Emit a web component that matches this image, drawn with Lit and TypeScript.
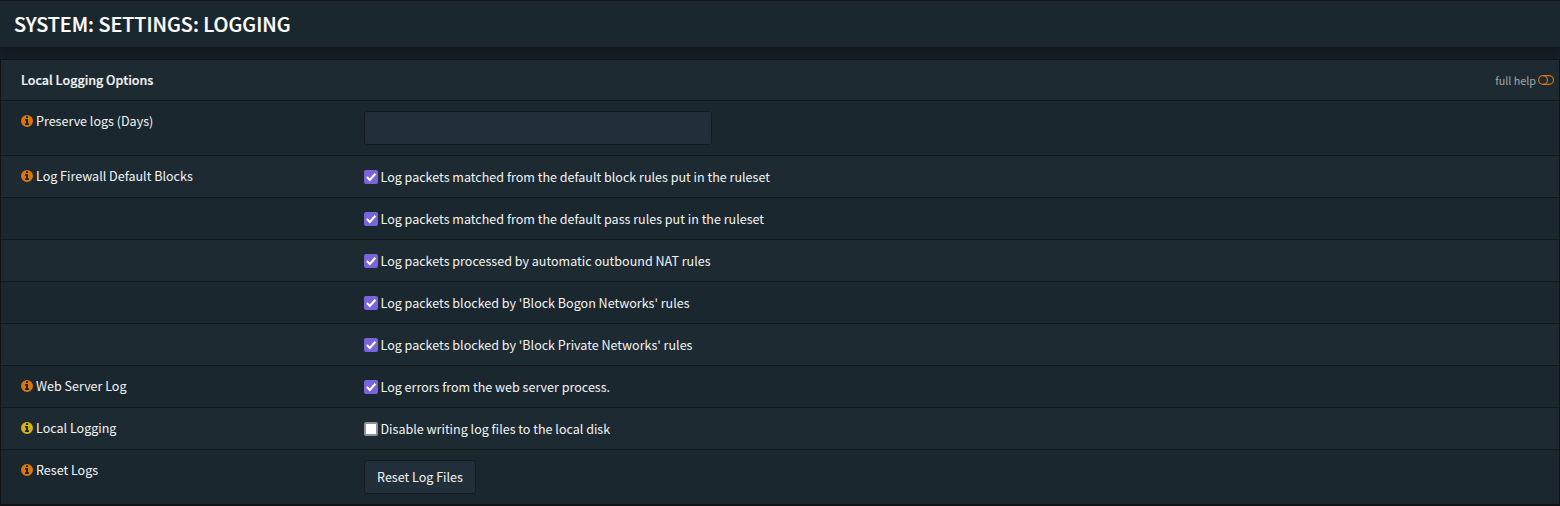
import { LitElement, html, css, svg } from "lit";
import { customElement } from "lit/decorators.js";

interface Option {
  label?: string;
  tone?: "orange" | "yellow";
  kind: "input" | "check" | "button";
  text?: string;
  checked?: boolean;
}

const OPTIONS: Option[] = [
  { label: "Preserve logs (Days)", tone: "orange", kind: "input" },
  { label: "Log Firewall Default Blocks", tone: "orange", kind: "check", checked: true, text: "Log packets matched from the default block rules put in the ruleset" },
  { kind: "check", checked: true, text: "Log packets matched from the default pass rules put in the ruleset" },
  { kind: "check", checked: true, text: "Log packets processed by automatic outbound NAT rules" },
  { kind: "check", checked: true, text: "Log packets blocked by 'Block Bogon Networks' rules" },
  { kind: "check", checked: true, text: "Log packets blocked by 'Block Private Networks' rules" },
  { label: "Web Server Log", tone: "orange", kind: "check", checked: true, text: "Log errors from the web server process." },
  { label: "Local Logging", tone: "yellow", kind: "check", checked: false, text: "Disable writing log files to the local disk" },
  { label: "Reset Logs", tone: "orange", kind: "button", text: "Reset Log Files" },
];

const infoGlyph = svg`<path fill-rule="evenodd" d="M768 0a768 768 0 1 1 0 1536a768 768 0 1 1 0-1536zM1024 1248v-160q0-14-9-23t-23-9h-96v-512q0-14-9-23t-23-9h-320q-14 0-23 9t-9 23v160q0 14 9 23t23 9h96v320h-96q-14 0-23 9t-9 23v160q0 14 9 23t23 9h448q14 0 23-9t9-23zM896 352v-160q0-14-9-23t-23-9h-192q-14 0-23 9t-9 23v160q0 14 9 23t23 9h192q14 0 23-9t9-23z"/>`;

@customElement("app-root")
export class AppRoot extends LitElement {
  static styles = css`
    :host {
      display: block;
      height: 506px;
      overflow: hidden;
      box-sizing: border-box;
      background: #151d25;
      color: #f2f4f5;
      font: 12.54px/20px "Noto Sans CJK SC", sans-serif;
    }
    .head {
      box-sizing: border-box;
      height: 47px;
      padding: 0 14px;
      border-top: 1px solid #171819;
      background: #1b272e;
      box-shadow: 0 1px 7px 1px #161616;
    }
    h1 {
      margin: 0;
      font-size: 19.75px;
      font-weight: 500;
      line-height: 46px;
      color: #fff;
      -webkit-text-stroke: 0.2px currentColor;
    }
    .panel {
      margin-top: 12px;
      border: 1px solid #121314;
      border-bottom-width: 2px;
    }
    .row {
      display: grid;
      grid-template-columns: 343px 1fr;
      box-sizing: border-box;
      height: 42px;
      padding: 10px 0 0 20px;
      border-top: 1px solid #16191b;
      background: #1b272e;
    }
    .row:nth-child(odd) {
      background: #1e2a31;
    }
    .row.tall {
      height: 55px;
    }
    .row.title {
      height: 40px;
      border-top: 0;
      grid-template-columns: 1fr auto;
      align-items: start;
      padding-right: 5px;
    }
    .title b {
      font-weight: 500;
      -webkit-text-stroke: 0.2px currentColor;
    }
    .help {
      display: flex;
      align-items: center;
      gap: 2px;
      font-size: 10.75px;
      line-height: 22px;
      color: #a4a8aa;
    }
    .help svg {
      margin-bottom: 2px;
    }
    .label {
      display: flex;
      gap: 3px;
    }
    .label svg {
      flex: none;
      width: 12px;
      height: 12px;
      margin-top: 4px;
    }
    .orange {
      fill: #dd750d;
    }
    .yellow {
      fill: #d8b00f;
    }
    .check {
      display: flex;
      gap: 2.5px;
      padding-top: 1px;
    }
    .box {
      flex: none;
      width: 14px;
      height: 14px;
      margin-top: 3px;
    }
    .input,
    .button {
      box-sizing: border-box;
      height: 34px;
      border: 1px solid #171a1c;
      border-radius: 3px;
      background: #222f3a;
    }
    .input {
      width: 348px;
    }
    .button {
      width: 112px;
      padding: 0;
      font: inherit;
      color: inherit;
    }
  `;

  private box(checked = false) {
    return checked
      ? html`<svg class="box" viewBox="0 0 14 14"><rect width="14" height="14" rx="2" fill="#7964dc" /><path d="M2.9 7.1 5.8 10 11.4 3.8" fill="none" stroke="#fff" stroke-width="2.1" /></svg>`
      : html`<svg class="box" viewBox="0 0 14 14"><rect x="1" y="1" width="12" height="12" rx="1" fill="#fff" stroke="#8f8f9d" stroke-width="2" /></svg>`;
  }

  private control(o: Option) {
    if (o.kind === "input") return html`<div class="input"></div>`;
    if (o.kind === "button") return html`<button class="button">${o.text}</button>`;
    return html`<div class="check">${this.box(o.checked)}<span>${o.text}</span></div>`;
  }

  render() {
    return html`
      <header class="head"><h1>SYSTEM: SETTINGS: LOGGING</h1></header>
      <main class="panel">
        <div class="row title">
          <b>Local Logging Options</b>
          <span class="help">full help<svg width="16" height="12" viewBox="0 0 16 12" fill="none" stroke="#d9730d" stroke-width="1.15"><rect x=".6" y="1.6" width="14.8" height="8.8" rx="4.4" /><path d="M5 1.6a4.4 4.4 0 0 1 0 8.8" /></svg></span>
        </div>
        ${OPTIONS.map(
          (o) => html`<div class="row ${o.kind === "check" ? "" : "tall"}">
            <div class="label">
              ${o.label ? html`<svg class=${o.tone!} viewBox="0 0 1536 1536">${infoGlyph}</svg><span>${o.label}</span>` : ""}
            </div>
            <div>${this.control(o)}</div>
          </div>`
        )}
      </main>
    `;
  }
}
